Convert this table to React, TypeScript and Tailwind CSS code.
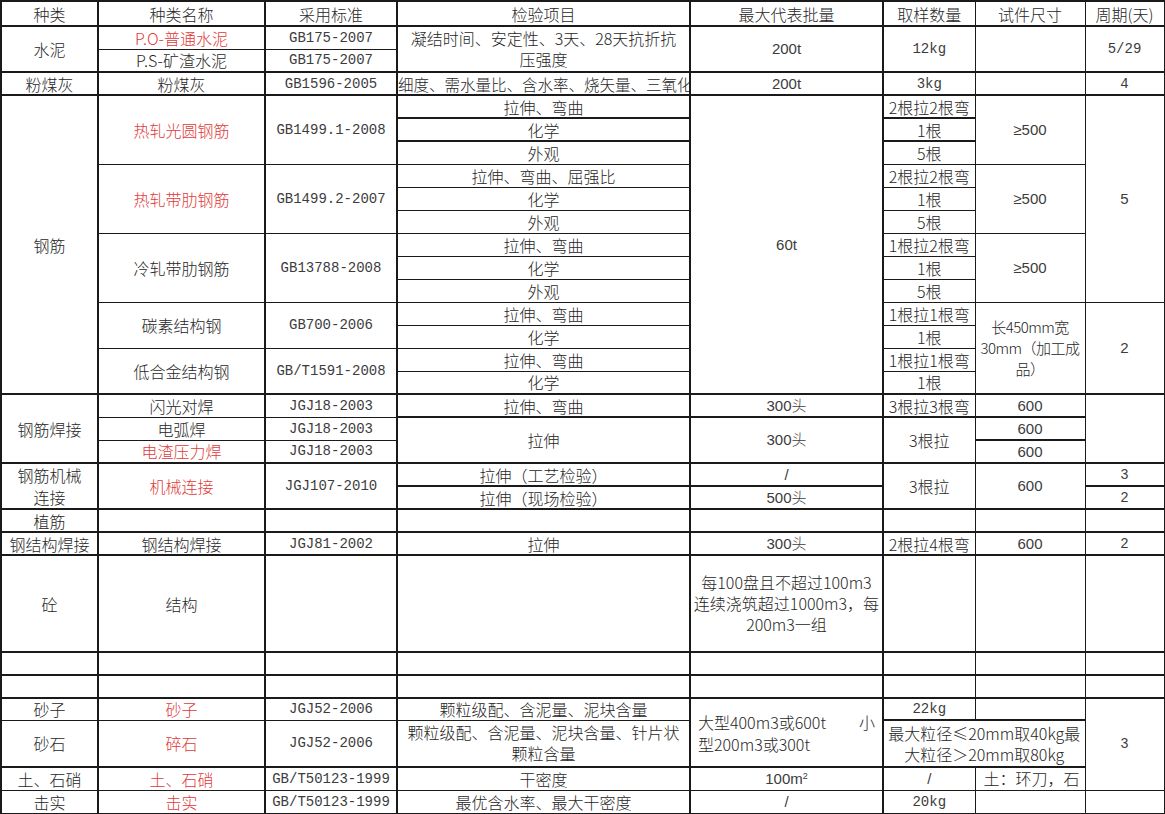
import type { ReactNode } from 'react';
import clsx from 'clsx';

// column ends (exclusive index) that get the heavy 2px rule
const thickEnds = [1, 2, 3, 4, 5];

interface CellProps {
  c: number;
  cs?: number;
  rs?: number;
  t?: boolean;
  className?: string;
  children?: ReactNode;
}

const C = ({ c, cs = 1, rs = 1, t = false, className = '', children }: CellProps) => {
  const end = c + cs;
  return (
    <td
      colSpan={cs}
      rowSpan={rs}
      className={clsx(
        'border border-[#1a1a1a] p-0 text-center align-middle whitespace-nowrap overflow-hidden',
        c === 0 && 'border-l-2',
        thickEnds.includes(end) && 'border-r-2',
        t && 'border-t-2',
        className
      )}
    >
      {children}
    </td>
  );
};

const mono = "font-['Liberation_Mono','Noto_Sans_CJK_SC',monospace] text-[14px] text-[#3c3c3c]";
const sans = "font-['Liberation_Sans','Noto_Sans_CJK_SC',sans-serif] text-[15px] text-[#3c3c3c]";
const red = 'text-[#e03a3a]';

const App = () => {
  return (
    <div className="bg-white w-[1165px] h-[814px] overflow-hidden">
      <table className="table-fixed border-collapse w-[1163px] font-['Noto_Sans_CJK_SC',sans-serif] font-light text-[16px] leading-[20px] text-[#262626]">
        <colgroup>
          <col className="w-[97px]" />
          <col className="w-[167px]" />
          <col className="w-[132px]" />
          <col className="w-[293px]" />
          <col className="w-[193px]" />
          <col className="w-[92px]" />
          <col className="w-[110px]" />
          <col className="w-[79px]" />
        </colgroup>
        <tbody>
          <tr className="h-[25px]">
            <C c={0} t>种类</C>
            <C c={1} t>种类名称</C>
            <C c={2} t>采用标准</C>
            <C c={3} t>检验项目</C>
            <C c={4} t>最大代表批量</C>
            <C c={5} t>取样数量</C>
            <C c={6} t>试件尺寸</C>
            <C c={7} t>周期(天)</C>
          </tr>

          {/* 水泥 */}
          <tr className="h-[23px]">
            <C c={0} rs={2} t>水泥</C>
            <C c={1} t className={red}>P.O-普通水泥</C>
            <C c={2} t className={mono}>GB175-2007</C>
            <C c={3} rs={2} t className="leading-[21px]">
              凝结时间、安定性、3天、28天抗折抗
              <br />
              压强度
            </C>
            <C c={4} rs={2} t className={sans}>200t</C>
            <C c={5} rs={2} t className={mono}>12kg</C>
            <C c={6} rs={2} t />
            <C c={7} rs={2} t className={mono}>5/29</C>
          </tr>
          <tr className="h-[23px]">
            <C c={1}>P.S-矿渣水泥</C>
            <C c={2} className={mono}>GB175-2007</C>
          </tr>

          <tr className="h-[23px]">
            <C c={0} t>粉煤灰</C>
            <C c={1} t>粉煤灰</C>
            <C c={2} t className={mono}>GB1596-2005</C>
            <C c={3} t className="text-[15.5px]">细度、需水量比、含水率、烧矢量、三氧化</C>
            <C c={4} t className={sans}>200t</C>
            <C c={5} t className={mono}>3kg</C>
            <C c={6} t />
            <C c={7} t className={mono}>4</C>
          </tr>

          {/* 钢筋 */}
          <tr className="h-[23px]">
            <C c={0} rs={13} t>钢筋</C>
            <C c={1} rs={3} t className={red}>热轧光圆钢筋</C>
            <C c={2} rs={3} t className={mono}>GB1499.1-2008</C>
            <C c={3} t>拉伸、弯曲</C>
            <C c={4} rs={13} t className={sans}>60t</C>
            <C c={5} t>2根拉2根弯</C>
            <C c={6} rs={3} t className={sans}>≥500</C>
            <C c={7} rs={9} t className={sans}>5</C>
          </tr>
          <tr className="h-[23px]">
            <C c={3} t>化学</C>
            <C c={5} t>1根</C>
          </tr>
          <tr className="h-[23px]">
            <C c={3} t>外观</C>
            <C c={5} t>5根</C>
          </tr>
          <tr className="h-[23px]">
            <C c={1} rs={3} className={red}>热轧带肋钢筋</C>
            <C c={2} rs={3} className={mono}>GB1499.2-2007</C>
            <C c={3}>拉伸、弯曲、屈强比</C>
            <C c={5}>2根拉2根弯</C>
            <C c={6} rs={3} className={sans}>≥500</C>
          </tr>
          <tr className="h-[23px]">
            <C c={3}>化学</C>
            <C c={5}>1根</C>
          </tr>
          <tr className="h-[23px]">
            <C c={3}>外观</C>
            <C c={5}>5根</C>
          </tr>
          <tr className="h-[23px]">
            <C c={1} rs={3}>冷轧带肋钢筋</C>
            <C c={2} rs={3} className={mono}>GB13788-2008</C>
            <C c={3}>拉伸、弯曲</C>
            <C c={5}>1根拉2根弯</C>
            <C c={6} rs={3} className={sans}>≥500</C>
          </tr>
          <tr className="h-[23px]">
            <C c={3}>化学</C>
            <C c={5}>1根</C>
          </tr>
          <tr className="h-[23px]">
            <C c={3}>外观</C>
            <C c={5}>5根</C>
          </tr>
          <tr className="h-[23px]">
            <C c={1} rs={2}>碳素结构钢</C>
            <C c={2} rs={2} className={mono}>GB700-2006</C>
            <C c={3}>拉伸、弯曲</C>
            <C c={5}>1根拉1根弯</C>
            <C c={6} rs={4} className="text-[15px] tracking-[-0.5px] leading-[21px]">
              长450mm宽
              <br />
              30mm（加工成
              <br />
              品）
            </C>
            <C c={7} rs={4} className={sans}>2</C>
          </tr>
          <tr className="h-[23px]">
            <C c={3}>化学</C>
            <C c={5}>1根</C>
          </tr>
          <tr className="h-[23px]">
            <C c={1} rs={2}>低合金结构钢</C>
            <C c={2} rs={2} className={mono}>GB/T1591-2008</C>
            <C c={3}>拉伸、弯曲</C>
            <C c={5}>1根拉1根弯</C>
          </tr>
          <tr className="h-[23px]">
            <C c={3}>化学</C>
            <C c={5}>1根</C>
          </tr>

          {/* 钢筋焊接 */}
          <tr className="h-[23px]">
            <C c={0} rs={3} t>钢筋焊接</C>
            <C c={1} t>闪光对焊</C>
            <C c={2} t className={mono}>JGJ18-2003</C>
            <C c={3} t>拉伸、弯曲</C>
            <C c={4} t className={sans}>300头</C>
            <C c={5} t>3根拉3根弯</C>
            <C c={6} t className={sans}>600</C>
            <C c={7} rs={3} t />
          </tr>
          <tr className="h-[23px]">
            <C c={1}>电弧焊</C>
            <C c={2} className={mono}>JGJ18-2003</C>
            <C c={3} rs={2} t>拉伸</C>
            <C c={4} rs={2} t className={sans}>300头</C>
            <C c={5} rs={2} t>3根拉</C>
            <C c={6} t className={sans}>600</C>
          </tr>
          <tr className="h-[23px]">
            <C c={1} className={red}>电渣压力焊</C>
            <C c={2} className={mono}>JGJ18-2003</C>
            <C c={6} t className={sans}>600</C>
          </tr>

          {/* 钢筋机械连接 */}
          <tr className="h-[23px]">
            <C c={0} rs={2} t className="leading-[22px]">
              钢筋机械
              <br />
              连接
            </C>
            <C c={1} rs={2} t className={red}>机械连接</C>
            <C c={2} rs={2} t className={mono}>JGJ107-2010</C>
            <C c={3} t>拉伸（工艺检验）</C>
            <C c={4} t className={sans}>/</C>
            <C c={5} rs={2} t>3根拉</C>
            <C c={6} rs={2} t className={sans}>600</C>
            <C c={7} t className={mono}>3</C>
          </tr>
          <tr className="h-[23px]">
            <C c={3} t>拉伸（现场检验）</C>
            <C c={4} t className={sans}>500头</C>
            <C c={7} t className={mono}>2</C>
          </tr>

          <tr className="h-[23px]">
            <C c={0} t>植筋</C>
            <C c={1} t />
            <C c={2} t />
            <C c={3} t />
            <C c={4} t />
            <C c={5} t />
            <C c={6} t />
            <C c={7} t />
          </tr>

          <tr className="h-[23px]">
            <C c={0} t>钢结构焊接</C>
            <C c={1} t>钢结构焊接</C>
            <C c={2} t className={mono}>JGJ81-2002</C>
            <C c={3} t>拉伸</C>
            <C c={4} t className={sans}>300头</C>
            <C c={5} t>2根拉4根弯</C>
            <C c={6} t className={sans}>600</C>
            <C c={7} t className={mono}>2</C>
          </tr>

          {/* 砼 */}
          <tr className="h-[97px]">
            <C c={0} t>砼</C>
            <C c={1} t>结构</C>
            <C c={2} t />
            <C c={3} t />
            <C c={4} t className="leading-[21px]">
              每100盘且不超过100m3
              <br />
              连续浇筑超过1000m3，每
              <br />
              200m3一组
            </C>
            <C c={5} t />
            <C c={6} t />
            <C c={7} t />
          </tr>
          <tr className="h-[23px]">
            <C c={0} t />
            <C c={1} t />
            <C c={2} t />
            <C c={3} t />
            <C c={4} t />
            <C c={5} t />
            <C c={6} t />
            <C c={7} t />
          </tr>
          <tr className="h-[23px]">
            <C c={0} t />
            <C c={1} t />
            <C c={2} t />
            <C c={3} t />
            <C c={4} t />
            <C c={5} t />
            <C c={6} t />
            <C c={7} t />
          </tr>

          {/* 砂石 */}
          <tr className="h-[22px]">
            <C c={0} t>砂子</C>
            <C c={1} t className={red}>砂子</C>
            <C c={2} t className={mono}>JGJ52-2006</C>
            <C c={3} t>颗粒级配、含泥量、泥块含量</C>
            <C c={4} rs={2} t className="text-left px-[7px] leading-[22px]">
              <div className="flex justify-between">
                <span>大型400m3或600t</span>
                <span>小</span>
              </div>
              <div>型200m3或300t</div>
            </C>
            <C c={5} t className={mono}>22kg</C>
            <C c={6} t />
            <C c={7} rs={3} t className={mono}>3</C>
          </tr>
          <tr className="h-[47px]">
            <C c={0}>砂石</C>
            <C c={1} className={red}>碎石</C>
            <C c={2} className={mono}>JGJ52-2006</C>
            <C c={3} className="leading-[21px]">
              颗粒级配、含泥量、泥块含量、针片状
              <br />
              颗粒含量
            </C>
            <C c={5} cs={2} t className="leading-[21px]">
              最大粒径≤20mm取40kg最
              <br />
              大粒径＞20mm取80kg
            </C>
          </tr>
          <tr className="h-[23px]">
            <C c={0} t>土、石硝</C>
            <C c={1} t className={red}>土、石硝</C>
            <C c={2} t className={mono}>GB/T50123-1999</C>
            <C c={3} t>干密度</C>
            <C c={4} t className={sans}>
              100m<sup className="text-[9px]">2</sup>
            </C>
            <C c={5} t className={sans}>/</C>
            <C c={6} t className="align-top">
              <div className="h-[21px] overflow-hidden whitespace-normal text-left pl-[8px] leading-[20px]">
                土：环刀，石硝：灌砂法
              </div>
            </C>
          </tr>
          <tr className="h-[23px]">
            <C c={0}>击实</C>
            <C c={1} className={red}>击实</C>
            <C c={2} className={mono}>GB/T50123-1999</C>
            <C c={3}>最优含水率、最大干密度</C>
            <C c={4} className={sans}>/</C>
            <C c={5} className={mono}>20kg</C>
            <C c={6} />
            <C c={7} />
          </tr>
        </tbody>
      </table>
    </div>
  );
};

export default App;
